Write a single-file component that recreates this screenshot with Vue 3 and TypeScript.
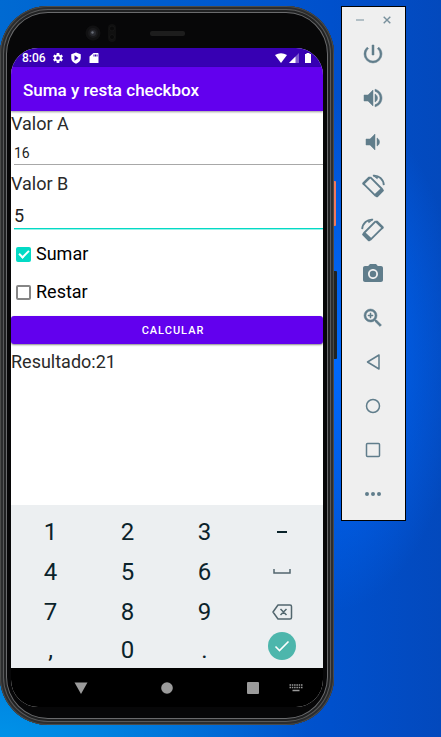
<script setup lang="ts">
import { computed, ref } from 'vue'

interface Tool {
  name: string
  fill?: string
  stroke?: string
  width?: number
  bold?: boolean
}

const tools: Tool[] = [
  { name: 'Power', bold: true, fill: 'M13 3h-2v10h2V3zm4.83 2.17l-1.42 1.42A6.92 6.92 0 0 1 19 12c0 3.87-3.13 7-7 7s-7-3.13-7-7c0-2.2 1.02-4.16 2.58-5.42L6.17 5.17A8.94 8.94 0 0 0 3 12a9 9 0 0 0 18 0c0-2.74-1.23-5.18-3.17-6.83z' },
  { name: 'Volume up', bold: true, fill: 'M3 9v6h4l5 5V4L7 9H3zm13.5 3c0-1.77-1.02-3.29-2.5-4.03v8.05c1.48-.73 2.5-2.25 2.5-4.02zM14 3.23v2.06c2.89.86 5 3.54 5 6.71s-2.11 5.85-5 6.71v2.06c4.01-.91 7-4.49 7-8.77s-2.99-7.86-7-8.77z' },
  { name: 'Volume down', bold: true, fill: 'M18.5 12c0-1.77-1.02-3.29-2.5-4.03v8.05c1.48-.73 2.5-2.25 2.5-4.02zM5 9v6h4l5 5V4L9 9H5z' },
  { name: 'Rotate left', fill: 'M13.2 20.6l6.9-6.7 2.4 1.6q.9.9 0 1.8l-5.6 5.6q-.9.9-1.8 0zM1.6 8.6l5.600-5.600q.9-.9 1.800 0l.9.9-7.400 7.400-.9-.9q-.9-.9 0-1.800zM11.3 1.2l5 4 .8-1.900z', stroke: 'M2.6 9.8l11.8 11.8L21 15 9.2 3.2M12 1.7c5.8-.8 10.6 3.8 10.8 9.4', width: 1.8 },
  { name: 'Rotate right', fill: 'M10.8 20.6l-6.9-6.7-2.4 1.6q-.9.9 0 1.8l5.6 5.6q.9.9 1.8 0zM22.4 8.6L16.8 3q-.9-.9-1.8 0l-.9.9 7.4 7.4.9-.9q.9-.9 0-1.8zM12.7 1.2l-5 4-.8-1.9z', stroke: 'M21.4 9.8L9.6 21.6 3 15 14.8 3.2M12 1.7C6.2.9 1.4 5.5 1.2 11.1', width: 1.8 },
  { name: 'Take screenshot', fill: 'M12 8.8a3.2 3.2 0 1 0 0 6.4a3.2 3.2 0 1 0 0-6.4zM9 2L7.17 4H4c-1.1 0-2 .9-2 2v12c0 1.1.9 2 2 2h16c1.1 0 2-.9 2-2V6c0-1.1-.9-2-2-2h-3.17L15 2H9zm3 15c-2.76 0-5-2.24-5-5s2.24-5 5-5 5 2.24 5 5-2.24 5-5 5z' },
  { name: 'Zoom', bold: true, fill: 'M15.5 14h-.79l-.28-.27A6.471 6.471 0 0 0 16 9.5 6.5 6.5 0 1 0 9.5 16c1.61 0 3.09-.59 4.23-1.57l.27.28v.79l5 4.99L20.49 19l-4.99-5zm-6 0C7.01 14 5 11.99 5 9.5S7.01 5 9.5 5 14 7.01 14 9.5 11.99 14 9.5 14zM12 10h-2v2H9v-2H7V9h2V7h1v2h2v1z' },
  { name: 'Back', stroke: 'M18 5v14L6.5 12z', width: 1.5 },
  { name: 'Home', stroke: 'M12 5.5a6.5 6.5 0 1 0 0 13a6.5 6.5 0 1 0 0-13z', width: 1.5 },
  { name: 'Overview', stroke: 'M6.5 5.5h11q1 0 1 1v11q0 1-1 1h-11q-1 0-1-1v-11q0-1 1-1z', width: 1.5 },
  { name: 'More', fill: 'M6 10a2 2 0 1 0 0 4a2 2 0 1 0 0-4zM12 10a2 2 0 1 0 0 4a2 2 0 1 0 0-4zM18 10a2 2 0 1 0 0 4a2 2 0 1 0 0-4z' },
]

const keys = ['1', '2', '3', '−', '4', '5', '6', 'space', '7', '8', '9', 'delete', ',', '0', '.', 'enter']

const valueA = ref('16')
const valueB = ref('5')
const add = ref(true)
const subtract = ref(false)
const result = ref('21')
const active = ref<'a' | 'b'>('b')

const target = computed({
  get: () => (active.value === 'a' ? valueA.value : valueB.value),
  set: (v: string) => {
    if (active.value === 'a') valueA.value = v
    else valueB.value = v
  },
})

function calculate() {
  const a = Number(valueA.value)
  const b = Number(valueB.value)
  const out: string[] = []
  if (add.value) out.push(String(a + b))
  if (subtract.value) out.push(String(a - b))
  result.value = out.join(' / ')
}

function press(key: string) {
  if (key === 'delete') target.value = target.value.slice(0, -1)
  else if (key === 'enter') calculate()
  else if (key === 'space') target.value += ' '
  else target.value += key === '−' ? '-' : key
}
</script>

<template>
  <div class="desktop">
    <div class="phone">
      <span class="side power"></span>
      <span class="side volume"></span>
      <div class="bezel">
        <div class="sensors">
          <svg class="lens" viewBox="0 0 16 16">
            <circle cx="8" cy="8" r="7.5" fill="#111112" />
            <circle cx="8" cy="8" r="5" fill="#1a1a1c" />
            <circle cx="8" cy="8" r="3" fill="#2a2b31" />
            <circle cx="7.5" cy="7.5" r="1.2" fill="#6a6e78" />
          </svg>
          <svg class="dots" viewBox="0 0 8 18">
            <rect width="8" height="18" rx="4" fill="#101010" />
            <circle cx="4" cy="4.5" r="2.5" fill="#0a0a0a" stroke="#161616" />
            <circle cx="4" cy="13" r="2.5" fill="#0a0a0a" stroke="#161616" />
          </svg>
        </div>
        <span class="speaker"></span>
      </div>

      <div class="screen">
        <div class="status">
          <span class="clock">8:06</span>
          <svg class="s-icon" viewBox="0 0 24 24"><path fill-rule="evenodd" d="M19.4 13a7 7 0 0 0 0-2l2.4-1.8-2.3-4-2.8 1.1-1.7-1L14.6 2H9.4L9 5.3l-1.7 1-2.8-1.1-2.3 4L4.6 11a7 7 0 0 0 0 2l-2.4 1.8 2.3 4 2.8-1.1 1.7 1 .4 3.3h5.2l.4-3.3 1.7-1 2.8 1.1 2.3-4zM12 8.3a3.7 3.7 0 1 1 0 7.4a3.7 3.7 0 1 1 0-7.4z" /></svg>
          <svg class="s-icon" viewBox="0 0 24 24"><path fill-rule="evenodd" d="M12 1L2.5 4.5V12c0 5.5 4 9.5 9.5 11.5 5.5-2 9.5-6 9.5-11.5V4.5zM9 6.5l8 5.5-8 5.5z" /></svg>
          <svg class="s-icon" viewBox="0 0 24 24"><path fill-rule="evenodd" d="M20 2h-9L3 9v13h18V3zM11 5h2v4h-2zM14 5h2v4h-2zM17 5h2v4h-2z" /></svg>
          <span class="spacer"></span>
          <svg class="wifi" viewBox="0 0 12 10"><path d="M0 2Q6-1.5 12 2L6 10z" /></svg>
          <svg class="signal" viewBox="0 0 10 10"><path d="M10 0v10H0z" opacity=".35" /><path d="M6.5 3.5V10H0z" /></svg>
          <svg class="battery" viewBox="0 0 6 10"><path d="M0 1h1.5V0h3v1H6v9H0z" /></svg>
        </div>
        <header class="appbar"><h1>Suma y resta checkbox</h1></header>

        <form class="content" @submit.prevent="calculate">
          <div class="field">
            <label for="a">Valor A</label>
            <input id="a" v-model="valueA" class="small" type="text" inputmode="numeric" :class="{ active: active === 'a' }" @focus="active = 'a'" />
          </div>
          <div class="field">
            <label for="b">Valor B</label>
            <input id="b" v-model="valueB" type="text" inputmode="numeric" :class="{ active: active === 'b' }" @focus="active = 'b'" />
          </div>
          <label class="check"><input v-model="add" type="checkbox" />Sumar</label>
          <label class="check"><input v-model="subtract" type="checkbox" />Restar</label>
          <button class="calc" type="submit">CALCULAR</button>
          <output class="result" for="a b">Resultado:{{ result }}</output>
        </form>

        <div class="keyboard">
          <button v-for="key in keys" :key="key" type="button" :aria-label="key" :class="{ enter: key === 'enter' }" @click="press(key)">
            <svg v-if="key === 'space'" width="20" height="8" viewBox="0 0 20 8"><path d="M2 1v4h16V1" fill="none" stroke="#52666e" stroke-width="1.5" /></svg>
            <svg v-else-if="key === 'delete'" width="22" height="18" viewBox="0 0 22 18"><path d="M7 2h12q1.500 0 1.500 1.500v11q0 1.500-1.500 1.500H7L2 9zM9.500 6l6 6M15.500 6l-6 6" fill="none" stroke="#52666e" stroke-width="1.5" stroke-linejoin="round" /></svg>
            <svg v-else-if="key === 'enter'" width="28" height="28" viewBox="0 0 28 28"><circle cx="14" cy="14" r="14" fill="#4db6ac" /><path d="M7.5 14.5l4 4 9-9" fill="none" stroke="#fff" stroke-width="1.6" /></svg>
            <svg v-else-if="key === '−'" width="12" height="8" viewBox="0 0 12 8"><path d="M1 4h10" stroke="#0b232b" stroke-width="2" /></svg>
            <template v-else>{{ key }}</template>
          </button>
        </div>

        <nav class="nav">
          <button type="button" aria-label="Back"><svg width="14" height="12" viewBox="0 0 14 12"><path d="M.5.5h13L7 12z" /></svg></button>
          <button type="button" class="home" aria-label="Home"><svg width="12" height="12" viewBox="0 0 12 12"><circle cx="6" cy="6" r="5.8" /></svg></button>
          <button type="button" aria-label="Recent"><svg width="12" height="12" viewBox="0 0 12 12"><rect width="12" height="12" rx="1" /></svg></button>
          <button type="button" class="ime" aria-label="Keyboard"><svg width="14" height="8" viewBox="0 0 14 8"><path d="M.5 1h13M.5 3.5h13" stroke="#999" stroke-width="1.4" stroke-dasharray="1.5 .8" /><path d="M3.5 6.5h7" stroke="#999" stroke-width="1.4" /></svg></button>
        </nav>
      </div>
    </div>

    <aside class="rail">
      <div class="window">
        <button type="button" aria-label="Minimize"><svg width="8" height="8" viewBox="0 0 8 8"><path d="M0 4h8" stroke="#a3b3ba" stroke-width="1.6" /></svg></button>
        <button type="button" aria-label="Close"><svg width="8" height="8" viewBox="0 0 8 8"><path d="M.7.7l6.600 6.600M7.300.7L.7 7.300" stroke="#78909c" stroke-width="1.4" /></svg></button>
      </div>
      <button v-for="tool in tools" :key="tool.name" type="button" class="tool" :aria-label="tool.name">
        <svg width="24" height="24" viewBox="0 0 24 24">
          <path v-if="tool.fill" :d="tool.fill" :class="{ bold: tool.bold }" fill="#607d8b" fill-rule="evenodd" />
          <path v-if="tool.stroke" :d="tool.stroke" fill="none" stroke="#607d8b" :stroke-width="tool.width" stroke-linejoin="round" />
        </svg>
      </button>
    </aside>
  </div>
</template>

<style>
body {
  margin: 0;
}
</style>

<style scoped>
.desktop {
  box-sizing: border-box;
  min-height: 100vh;
  display: flex;
  align-items: stretch;
  gap: 7px;
  padding: 6px 35px 12px 0;
  font-family: Roboto, sans-serif;
  background:
    radial-gradient(ellipse 70% 20% at 0% 100%, #0092e8, transparent),
    radial-gradient(ellipse 30% 35% at 75% 48%, #006aff, transparent),
    linear-gradient(90deg, #006ad2, #0050cc 75%, #0349bd);
}
button {
  border: 0;
  padding: 0;
  background: none;
  font-family: inherit;
  display: flex;
  align-items: center;
  justify-content: center;
  cursor: pointer;
}
.phone {
  position: relative;
  box-sizing: border-box;
  flex: 1;
  display: flex;
  flex-direction: column;
  padding: 0 11px 18px;
  border-radius: 48px;
  background: #070708;
  box-shadow:
    inset 0 0 0 1px #4a4b4a,
    inset 0 0 0 3px #2c2d2e,
    inset 0 0 0 4px #58595a,
    inset 0 0 0 6px #202122,
    inset 0 0 0 7px #6a6b6d;
}
.side {
  position: absolute;
  left: 100%;
  border-radius: 0 1px 1px 0;
}
.power {
  top: 175px;
  width: 2px;
  height: 45px;
  background: #f0785a;
}
.volume {
  top: 265px;
  width: 3px;
  height: 88px;
  background: #202426;
}
.bezel {
  height: 42px;
  box-sizing: border-box;
  padding-top: 12px;
  display: grid;
  grid-template-columns: 1fr auto 1fr;
  align-items: center;
}
.sensors {
  display: flex;
  align-items: center;
  justify-content: flex-end;
  gap: 7px;
  padding-right: 34px;
}
.lens {
  width: 16px;
  height: 16px;
}
.dots {
  width: 8px;
  height: 18px;
}
.speaker {
  width: 35px;
  height: 5px;
  border-radius: 2px;
  background: #1d1d1d;
}
.screen {
  flex: 1;
  display: flex;
  flex-direction: column;
  overflow: hidden;
  border-radius: 27px;
  background: #fff;
}
.status {
  height: 19px;
  display: flex;
  align-items: center;
  padding: 0 12px 0 11px;
  background: #3700b3;
  color: #fff;
}
.status svg {
  fill: #fff;
}
.clock {
  font-size: 12px;
  font-weight: 500;
  margin-right: 6px;
}
.s-icon {
  width: 12px;
  height: 12px;
  margin-right: 6px;
}
.spacer {
  flex: 1;
}
.wifi {
  width: 12px;
  height: 10px;
  margin-right: 2px;
}
.signal {
  width: 10px;
  height: 10px;
  margin-right: 6px;
}
.battery {
  width: 6px;
  height: 10px;
}
.appbar {
  position: relative;
  box-sizing: border-box;
  height: 44px;
  display: flex;
  align-items: center;
  padding: 2px 12px 0;
  background: #6200ee;
  box-shadow: 0 1px 2px #0006;
}
h1 {
  margin: 0;
  font-size: 17px;
  font-weight: 500;
  line-height: 24px;
  color: #fff;
}
.content {
  flex: 1;
  display: flex;
  flex-direction: column;
  font-size: 18px;
  line-height: 26px;
  color: #2a2a2a;
}
.field {
  display: flex;
  flex-direction: column;
  padding-bottom: 6px;
}
.field input {
  box-sizing: border-box;
  height: 32px;
  margin-left: 3px;
  padding: 5px 0 0;
  border: 0;
  border-bottom: 1px solid #a8a8a8;
  border-radius: 0;
  outline: 0;
  background: none;
  font-family: inherit;
  font-size: 18px;
  color: #222;
}
.field .small {
  height: 28px;
  font-size: 14px;
}
.field .active {
  border-bottom-color: #03dac5;
  box-shadow: 0 1px 0 #03dac566;
}
.check {
  height: 38px;
  display: flex;
  align-items: center;
  gap: 5px;
  padding-left: 5px;
  color: #000;
}
.check input {
  appearance: none;
  box-sizing: border-box;
  width: 15px;
  height: 15px;
  margin: 0;
  border: 2px solid #868686;
  border-radius: 2px;
}
.check input:checked {
  border-color: #03dac5;
  background: #03dac5;
  display: flex;
  align-items: center;
  justify-content: center;
}
.check input:checked::before {
  content: '';
  width: 8px;
  height: 4px;
  border: solid #fff;
  border-width: 0 0 2px 2px;
  transform: translateY(-1px) rotate(-45deg);
}
.calc {
  height: 28px;
  margin: 5px 0;
  padding-left: 12px;
  border-radius: 3px;
  background: #6200ee;
  box-shadow: 0 1px 2px #0007;
  color: #fff;
  font-size: 11px;
  font-weight: 500;
  letter-spacing: 1px;
}
.keyboard {
  display: grid;
  grid-template-columns: repeat(4, 1fr);
  grid-template-rows: repeat(3, 40px) 36px;
  padding: 7px 3px 0 1px;
  background: #eceff1;
}
.keyboard button {
  font-size: 24px;
  line-height: 36px;
  color: #0b232b;
}
.keyboard .enter {
  align-items: flex-start;
}
.nav {
  height: 39px;
  display: flex;
  justify-content: flex-end;
  padding-right: 13px;
  background: #000;
}
.nav button {
  width: 58px;
}
.nav .home {
  width: 114px;
}
.nav .ime {
  width: 28px;
}
.nav svg {
  fill: #9b9b9b;
}
.rail {
  box-sizing: border-box;
  align-self: flex-start;
  width: 65px;
  padding: 0 1px 4px 0;
  border: 1px solid #000;
  background: #efefef;
}
.window {
  height: 24px;
  display: flex;
  align-items: center;
  justify-content: center;
  gap: 19px;
  padding-top: 1px;
}
.tool {
  width: 100%;
  height: 44px;
}
.bold {
  stroke: #607d8b;
  stroke-width: 0.5;
}
</style>
